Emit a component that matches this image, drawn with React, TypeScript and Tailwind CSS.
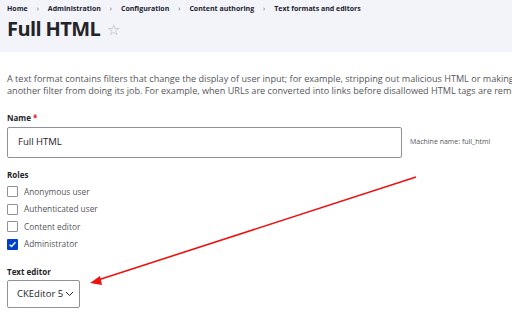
import React from "react";

const font = { fontFamily: '"Open Sans", "Noto Sans", sans-serif' };

function Check({ checked }: { checked?: boolean }) {
  return checked ? (
    <span className="w-[11px] h-[11px] bg-[#003ecc] rounded-[1px] flex items-center justify-center">
      <svg width="9" height="9" viewBox="0 0 10 10">
        <path d="M1.8 5.2 L4 7.3 L8.3 2.6" fill="none" stroke="white" strokeWidth="1.6" />
      </svg>
    </span>
  ) : (
    <span className="w-[11px] h-[11px] border border-[#8e929c] rounded-[1px] bg-white" />
  );
}

export default function App() {
  const roles = [
    ["Anonymous user", false],
    ["Authenticated user", false],
    ["Content editor", false],
    ["Administrator", true],
  ] as const;
  return (
    <div className="relative w-[512px] h-[318px] overflow-hidden bg-white text-[#232429]" style={font}>
      <div className="bg-[#f3f4f9] h-[52px] px-[7px] pt-[3px]">
        <div className="flex items-center gap-[9px] text-[7px] font-bold text-[#222330] h-[12px]">
          <span>Home</span>
          <span className="font-normal text-[#555]">›</span>
          <span>Administration</span>
          <span className="font-normal text-[#555]">›</span>
          <span>Configuration</span>
          <span className="font-normal text-[#555]">›</span>
          <span>Content authoring</span>
          <span className="font-normal text-[#555]">›</span>
          <span>Text formats and editors</span>
        </div>
        <div className="flex items-center gap-[7px] mt-[1px]">
          <span className="text-[20px] font-bold leading-[26px] tracking-[-0.6px]">Full HTML</span>
          <span className="text-[15px] text-[#b0b0b8] leading-none">☆</span>
        </div>
      </div>
      <div className="px-[7px]">
        <p className="mt-[21px] text-[9.1px] leading-[12px] text-[#55565b] whitespace-nowrap">
          A text format contains filters that change the display of user input; for example, stripping out malicious HTML or making
          <br />
          another filter from doing its job. For example, when URLs are converted into links before disallowed HTML tags are removed
        </p>
        <div className="mt-[16px] text-[8px] font-bold leading-[10px]">
          Name<span className="text-[#dc2323] ml-[2px]">*</span>
        </div>
        <div className="flex items-center mt-[4px]">
          <div className="w-[395px] h-[31px] border border-[#8e929c] rounded-[2px] flex items-center pl-[10px] text-[9.5px]">
            Full HTML
          </div>
          <span className="ml-[8px] text-[7px] text-[#55565b]">Machine name: full_html</span>
        </div>
        <div className="mt-[12px] text-[8px] font-bold leading-[10px]">Roles</div>
        <div className="mt-[3px] flex flex-col">
          {roles.map(([r, c]) => (
            <div key={r} className="flex items-center gap-[6px] h-[17.5px] text-[8.3px] text-[#55565b]">
              <Check checked={c} />
              <span>{r}</span>
            </div>
          ))}
        </div>
        <div className="mt-[14px] text-[8px] font-bold leading-[10px]">Text editor</div>
        <div className="mt-[3px] w-[73px] h-[28px] border border-[#8e929c] rounded-[2px] flex items-center pl-[9px] text-[9.5px] gap-[2px]">
          <span>CKEditor 5</span>
          <svg width="9" height="6" viewBox="0 0 9 6">
            <path d="M1 1 L4.5 4.5 L8 1" fill="none" stroke="#232429" strokeWidth="1" />
          </svg>
        </div>
      </div>
      <svg className="absolute left-0 top-0 pointer-events-none" width="512" height="318">
        <line x1="416" y1="177" x2="98" y2="280" stroke="#ee1111" strokeWidth="1.6" />
        <polygon points="90,283 100,276 102,285" fill="#ee1111" />
      </svg>
    </div>
  );
}
